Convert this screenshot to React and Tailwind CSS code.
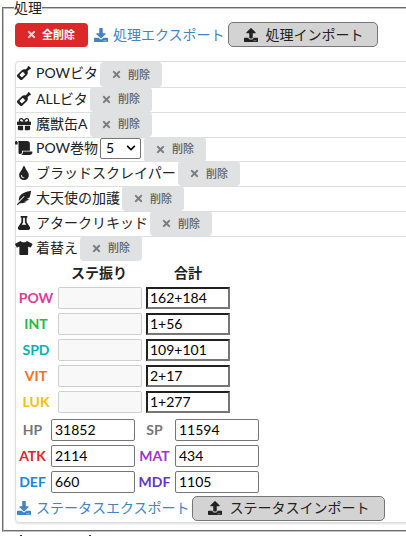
import React from "react";
import { FaWineBottle, FaGift, FaScroll, FaTint, FaFeatherAlt, FaFlask, FaTshirt, FaDownload, FaUpload, FaTimes, FaChevronDown } from "react-icons/fa";

const ITEMS = [
  { Icon: FaWineBottle, name: "POWビタ", w: "w-[62px]" },
  { Icon: FaWineBottle, name: "ALLビタ", w: "w-[52px]" },
  { Icon: FaGift, name: "魔獣缶A", w: "w-[52px]" },
  { Icon: FaScroll, name: "POW巻物", w: "w-[62px]", count: 5, wide: true },
  { Icon: FaTint, name: "ブラッドスクレイパー", w: "w-[140px]" },
  { Icon: FaFeatherAlt, name: "大天使の加護", w: "w-[84px]" },
  { Icon: FaFlask, name: "アタークリキッド", w: "w-[112px]" },
  { Icon: FaTshirt, name: "着替え", w: "w-[42px]", wide: true },
];

const STATS = [
  ["POW", "162+184", "text-[#e03997]"],
  ["INT", "1+56", "text-[#21ba45]"],
  ["SPD", "109+101", "text-[#00b5ad]"],
  ["VIT", "2+17", "text-[#f2711c]"],
  ["LUK", "1+277", "text-[#fbbd08]"],
];

const RESULTS = [
  ["HP", "31852", "text-[#767676]", "SP", "11594", "text-[#767676]"],
  ["ATK", "2114", "text-[#db2828]", "MAT", "434", "text-[#a333c8]"],
  ["DEF", "660", "text-[#2185d0]", "MDF", "1105", "text-[#6435c9]"],
];

function DeleteButton() {
  return (
    <button className="flex h-[25px] w-[62px] shrink-0 items-center rounded-[4px] bg-[#e0e1e2] pl-[11px] text-[11px] leading-[14px] font-medium text-[#5f6061]">
      <FaTimes className="mr-[6px] size-[11px] text-[#7c7d7e]" />
      削除
    </button>
  );
}

function ItemRow({ Icon, name, w, count, wide }) {
  return (
    <div className="group flex h-[24.85px] items-center border-t border-[#dededf] first:border-t-0">
      <span className="mr-[4px] flex w-[16px] shrink-0 justify-center pb-[2px]">
        <Icon className={wide ? "h-[14px] w-[17.5px] shrink-0" : "size-[14px] shrink-0"} />
      </span>
      <span className={`${w} shrink-0 pb-[2px] whitespace-nowrap`}>{name}</span>
      {count && (
        <span className="ml-[2px] mr-px flex h-[21px] w-[41px] -translate-y-px items-center justify-between rounded-[2px] border border-[#767676] bg-white pr-1 pl-[5px] text-black">
          {count}
          <FaChevronDown className="size-[10px]" />
        </span>
      )}
      <span className="-mt-px ml-[2px] self-start group-first:mt-0"><DeleteButton /></span>
    </div>
  );
}

function Export({ children }) {
  return (
    <a className="flex items-center whitespace-nowrap text-[#4183c4]">
      <FaDownload className="mr-[5px] size-[14px]" />
      {children}
    </a>
  );
}

function Import({ children, className }) {
  return (
    <button className={`${className} flex h-[25px] shrink-0 items-center rounded-[5px] border border-[#767676] bg-[#d3d3d3] pl-[15px] whitespace-nowrap`}>
      <FaUpload className="mr-[8px] size-[14px]" />
      {children}
    </button>
  );
}

export default function App() {
  return (
    <div className="h-[536px] w-[406px] overflow-hidden bg-white font-['Lato','Noto_Sans_CJK_JP',sans-serif] text-[14px] leading-[20px] text-[#212121]">
      <fieldset className="ml-[2px] h-[532px] w-[420px] border-2 border-[#c0c0c0] [border-style:groove] pl-[11px]">
        <legend className="-ml-px h-[15px] leading-[15px]">処理</legend>
        <div className="mt-[7px] flex h-[25px] items-center">
          <button className="flex h-[24px] w-[73px] items-center rounded-[4px] bg-[#db2828] pl-[11px] text-[11px] font-bold text-white">
            <FaTimes className="mr-[5px] size-[11px] opacity-80" />
            全削除
          </button>
          <span className="ml-[6px]"><Export>処理エクスポート</Export></span>
          <Import className="ml-[3px] w-[150px]">処理インポート</Import>
        </div>
        <div className="mt-[14px] h-[462px] w-[410px] rounded-[4px] border border-[#dededf] shadow-[0_1px_2px_rgba(34,36,38,0.15)]">
          {ITEMS.map((item) => <ItemRow key={item.name} {...item} />)}
          <div className="flex h-[24.2px] items-center font-bold">
            <span className="ml-[42px] w-[82px] text-center">ステ振り</span>
            <span className="ml-[7px] w-[82px] text-center">合計</span>
          </div>
          {STATS.map(([label, total, color]) => (
            <div key={label} className="flex h-[26px] items-center">
              <span className={`${color} w-[42px] pr-[2px] text-center font-bold`}>{label}</span>
              <span className="h-[22px] w-[84px] rounded-[2px] border border-[#cfcfcf] bg-[#f8f8f8]" />
              <span className="ml-[4px] flex h-[22px] w-[84px] items-center border-2 border-t-[#212121] border-r-[#767676] border-b-[#767676] border-l-[#212121] pl-[2px] text-black">{total}</span>
            </div>
          ))}
          <div className="h-[2px]" />
          {RESULTS.map(([a, av, ac, b, bv, bc]) => (
            <div key={a} className="flex h-[26px] items-center">
              <span className={`${ac} w-[35px] pr-[2px] text-center font-bold`}>{a}</span>
              <span className="flex h-[22px] w-[84px] items-center rounded-[2px] border border-[#767676] pl-[3px] text-black">{av}</span>
              <span className={`${bc} w-[40px] pr-px text-center font-bold`}>{b}</span>
              <span className="flex h-[22px] w-[84px] items-center rounded-[2px] border border-[#767676] pl-[3px] text-black">{bv}</span>
            </div>
          ))}
          <div className="mt-px flex h-[25px] items-center pl-px">
            <Export>ステータスエクスポート</Export>
            <Import className="ml-[2px] w-[193px]">ステータスインポート</Import>
          </div>
        </div>
      </fieldset>
      <div className="flex gap-[67px] pt-[3px] pl-[20px]">
        <span className="h-px w-[2px] bg-[#333]" />
        <span className="h-px w-[2px] bg-[#333]" />
      </div>
    </div>
  );
}
